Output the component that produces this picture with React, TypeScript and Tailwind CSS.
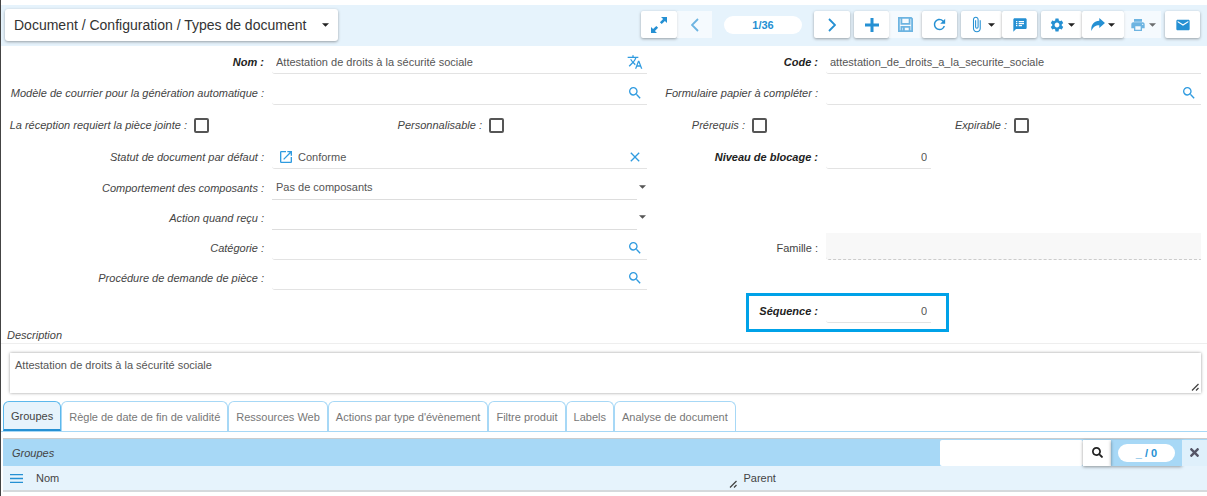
import type { ReactNode } from "react";
import { FaSearch, FaTimes } from "react-icons/fa";
import {
  MdAttachFile,
  MdClose,
  MdEmail,
  MdOpenInNew,
  MdPrint,
  MdRefresh,
  MdSearch,
  MdSettings,
  MdSpeakerNotes,
  MdTranslate,
} from "react-icons/md";

const tabs = [
  "Groupes",
  "Règle de date de fin de validité",
  "Ressources Web",
  "Actions par type d'évènement",
  "Filtre produit",
  "Labels",
  "Analyse de document",
];

const checks = [
  { id: "reception", label: "La réception requiert la pièce jointe :" },
  { id: "personnalisable", label: "Personnalisable :" },
  { id: "prerequis", label: "Prérequis :" },
  { id: "expirable", label: "Expirable :" },
];

const Caret = ({ className = "text-[#222]" }: { className?: string }) => (
  <svg viewBox="0 0 8 4" className={`w-[7px] h-1 shrink-0 ${className}`} fill="currentColor">
    <path d="M0 0h8L4 4z" />
  </svg>
);

const ExpandIcon = () => (
  <svg viewBox="0 0 16 16" className="size-4" fill="currentColor">
    <path d="M10 0h6v6l-2.1-2.1-3.2 3.2-1.8-1.8 3.2-3.2zM6 16H0v-6l2.1 2.1 3.2-3.2 1.8 1.8-3.2 3.2z" />
  </svg>
);

const ChevronIcon = ({ left }: { left?: boolean }) => (
  <svg viewBox="0 0 8 14" className="w-2 h-[14px]" fill="none" stroke="currentColor" strokeWidth="1.8">
    <path d={left ? "M7 1 1 7l6 6" : "m1 1 6 6-6 6"} />
  </svg>
);

const PlusIcon = () => (
  <svg viewBox="0 0 14 14" className="size-[14px]" stroke="currentColor" strokeWidth="3">
    <path d="M7 0v14M0 7h14" />
  </svg>
);

const SaveIcon = () => (
  <svg viewBox="0 0 15 15" className="size-[15px]" fill="none" stroke="currentColor" strokeWidth="1.8">
    <path d="M.9.9h12.2l1 1v12.2H.9zM3.4.9v6h8.2v-6M3.4 14V9.8h8.2V14" />
    <path d="M5.8 10v4" strokeWidth="2" />
  </svg>
);

const ShareIcon = () => (
  <svg viewBox="0 0 16 15" className="w-[14px] h-[13px]" fill="currentColor">
    <path d="M9.5 0 16 5.8l-6.5 5.8V8.4C5.5 8.3 2.6 10 .4 15-.6 8.600 3 3.600 9.500 3.300z" />
  </svg>
);

const MenuIcon = () => (
  <svg viewBox="0 0 13 9" className="w-[13px] h-[9px]" stroke="currentColor" strokeWidth="1.3">
    <path d="M0 .7h13M0 4.500h13M0 8.300h13" />
  </svg>
);

const Grip = () => (
  <svg viewBox="0 0 8 8" className="size-2" stroke="#444" strokeWidth="1.3">
    <path d="m1 7.500 6.500-6.500M5 7.500 7.500 5" />
  </svg>
);

interface ToolProps {
  label: string;
  width?: string;
  disabled?: boolean;
  children: ReactNode;
}

const Tool = ({ label, width = "w-[35px]", disabled, children }: ToolProps) => (
  <button
    type="button"
    aria-label={label}
    disabled={disabled}
    className={`flex h-[27px] items-center justify-center gap-[3px] text-[#2590d3] ${width} ${
      disabled ? "bg-white/60 [&>svg]:opacity-65" : "rounded-[2px] bg-white shadow-[0_1px_3px_rgba(0,0,0,0.35)]"
    }`}
  >
    {children}
  </button>
);

interface FieldProps {
  id: string;
  label: string;
  value?: string;
  bold?: boolean;
  number?: boolean;
  upright?: boolean;
  readOnly?: boolean;
  select?: boolean;
  before?: ReactNode;
  icon?: ReactNode;
}

const Field = ({ id, label, value = "", bold, number, upright, readOnly, select, before, icon }: FieldProps) => (
  <>
    <label
      htmlFor={id}
      className={`pr-2 pt-[2px] text-right whitespace-nowrap ${bold ? "font-bold text-[#222]" : ""} ${upright ? "" : "italic"}`}
    >
      {label}
    </label>
    {select ? (
      <div className="flex h-[27px] items-center">
        <select
          id={id}
          defaultValue={value}
          className="h-full min-w-0 flex-1 appearance-none border-b border-[#ddd] px-1 pt-px text-[#555]"
        >
          <option>{value}</option>
        </select>
        <div className="pl-[2px] pr-px">
          <Caret className="text-[#555]" />
        </div>
      </div>
    ) : (
      <div
        className={`flex h-[27px] items-center rounded-bl-[3px] border-b ${number ? "w-[105px]" : ""} ${
          readOnly ? "border-dashed border-[#ccc] bg-[#f8f8f8]" : "border-[#e3e3e3]"
        }`}
      >
        {before}
        <input
          id={id}
          type="text"
          readOnly={readOnly}
          defaultValue={value}
          className={`h-full min-w-0 flex-1 px-1 pt-[3px] text-[#555] outline-none ${number ? "text-right" : ""}`}
        />
        {icon && (
          <button type="button" aria-label={`Ouvrir ${label}`} className="mr-1 pt-[3px] text-base text-[#2f9be0]">
            {icon}
          </button>
        )}
      </div>
    )}
  </>
);

export default function App() {
  return (
    <div className="border-l border-[#444] bg-white pb-1 pt-[5px] font-['Liberation_Sans',Arial,sans-serif] text-[11px] leading-4 text-[#444]">
      <header className="flex h-[41px] items-center justify-between bg-[#e6f3fc] pb-[2px] pl-1 pr-[7px]">
        <button
          type="button"
          className="flex h-8 items-center gap-4 rounded-[3px] bg-white px-[9px] text-sm text-[#333] shadow-[0_1px_3px_rgba(0,0,0,0.35)]"
        >
          Document / Configuration / Types de document
          <Caret />
        </button>

        <div className="flex items-center gap-1">
          <div className="flex">
            <Tool label="Agrandir" width="w-9"><ExpandIcon /></Tool>
            <Tool label="Précédent" disabled><ChevronIcon left /></Tool>
          </div>
          <span className="mx-2 w-[78px] rounded-full bg-white text-center font-bold leading-[18px] text-[#2590d3]">1/36</span>
          <Tool label="Suivant" width="w-9"><ChevronIcon /></Tool>
          <div className="flex">
            <Tool label="Nouveau"><PlusIcon /></Tool>
            <Tool label="Enregistrer" disabled width="w-[33px]"><SaveIcon /></Tool>
            <Tool label="Recharger"><MdRefresh size={17} /></Tool>
          </div>
          <div className="flex">
            <Tool label="Attachements" width="w-[41px]"><MdAttachFile size={17} /><Caret /></Tool>
            <Tool label="Notes"><MdSpeakerNotes size={16} /></Tool>
          </div>
          <div className="flex">
            <Tool label="Actions" width="w-[41px]"><MdSettings size={16} /><Caret /></Tool>
            <Tool label="Relations" width="w-[42px]"><ShareIcon /><Caret /></Tool>
            <Tool label="Imprimer" disabled width="w-[37px]"><MdPrint size={16} /><Caret /></Tool>
          </div>
          <Tool label="E-mail"><MdEmail size={16} /></Tool>
        </div>
      </header>

      <main>
        <div className="grid grid-cols-[271fr_375fr_179fr_375fr] items-center gap-y-1 pr-[6px] pt-px">
          <Field id="nom" label="Nom :" bold value="Attestation de droits à la sécurité sociale" icon={<MdTranslate />} />
          <Field id="code" label="Code :" bold value="attestation_de_droits_a_la_securite_sociale" />
          <Field id="modele" label="Modèle de courrier pour la génération automatique :" icon={<MdSearch />} />
          <Field id="formulaire" label="Formulaire papier à compléter :" icon={<MdSearch />} />

          <div className="col-span-4 grid h-[29px] grid-cols-[208fr_295fr_263fr_262fr_172fr] items-center pt-[3px]">
            {checks.map((check) => (
              <div key={check.id} className="flex items-center justify-end gap-[7px]">
                <label htmlFor={check.id} className="whitespace-nowrap italic">{check.label}</label>
                <input
                  id={check.id}
                  type="checkbox"
                  className="size-[15px] appearance-none rounded-[2px] border-2 border-[#555] bg-white checked:bg-[#2590d3]"
                />
              </div>
            ))}
          </div>

          <Field
            id="statut"
            label="Statut de document par défaut :"
            value="Conforme"
            before={<MdOpenInNew size={16} className="ml-[6px] mt-[3px] text-[#2f9be0]" />}
            icon={<MdClose />}
          />
          <Field id="niveau" label="Niveau de blocage :" bold number value="0" />
        </div>

        <div className="grid grid-cols-[271fr_375fr_179fr_375fr] items-center gap-y-[3px] pr-[6px] pt-1">
          <Field id="comportement" label="Comportement des composants :" select value="Pas de composants" />
          <div className="col-span-2" />
          <Field id="action" label="Action quand reçu :" select />
          <div className="col-span-2" />
          <Field id="categorie" label="Catégorie :" icon={<MdSearch />} />
          <Field id="famille" label="Famille :" upright readOnly />
          <Field id="procedure" label="Procédure de demande de pièce :" icon={<MdSearch />} />
          <div className="col-span-2" />
          <div className="col-span-2 col-start-3 ml-[99px] grid w-[203px] grid-cols-[77px_1fr] items-center border-[3px] border-[#00a2e8] pb-[6px]">
            <Field id="sequence" label="Séquence :" bold number value="0" />
          </div>
        </div>

        <div className="-mt-[5px] border-b border-[#eee] pl-[6px]">
          <label htmlFor="description" className="italic">Description</label>
        </div>
        <div className="relative ml-[9px] mr-[6px] mt-[9px] h-10 shadow-[0_0_3px_rgba(0,0,0,0.4)]">
          <textarea
            id="description"
            className="block h-full w-full resize-none px-[5px] py-1 text-[#555] outline-none"
            defaultValue="Attestation de droits à la sécurité sociale"
          />
          <div className="absolute bottom-[2px] right-[2px]"><Grip /></div>
        </div>

        <div role="tablist" className="mt-2 flex border-b border-[#a7d8f6] pl-[2px]">
          {tabs.map((tab, index) => (
            <button
              key={tab}
              type="button"
              role="tab"
              aria-selected={index === 0}
              className={`h-[30px] rounded-t-md px-[7px] whitespace-nowrap ${
                index === 0
                  ? "border border-b-2 border-[#5cb8ec] border-b-[#2590d3] bg-[#e6f3fc] text-[#444]"
                  : "border-x border-t border-[#a7d8f6] text-[#777]"
              }`}
            >
              {tab}
            </button>
          ))}
        </div>

        <section className="ml-[2px] mt-[6px] border-t border-[#ccc]">
          <div className="flex h-[27px] items-center bg-[#a7d8f6]">
            <h2 className="flex-1 pl-[9px] italic">Groupes</h2>
            <input type="text" aria-label="Rechercher" className="h-[26px] w-[143px] rounded-[2px] bg-white px-1 outline-none" />
            <button type="button" aria-label="Lancer la recherche" className="flex h-[26px] w-7 items-center justify-center bg-white text-[#222] shadow-[0_1px_3px_rgba(0,0,0,0.4)]">
              <FaSearch size={11} />
            </button>
            <div className="flex h-[26px] w-[71px] items-center justify-center shadow-[0_1px_3px_rgba(0,0,0,0.35)]">
              <span className="w-[57px] rounded-full bg-white text-center font-bold leading-[18px] text-[#2590d3]">_ / 0</span>
            </div>
            <button type="button" aria-label="Supprimer" className="flex h-[26px] w-[25px] items-center justify-center bg-[#dff0fb] text-[#556]">
              <FaTimes size={13} />
            </button>
          </div>
          <table className="w-full table-fixed border-b-2 border-[#d5d9dc] bg-[#e6f3fc]">
            <thead>
              <tr className="h-[25px] text-left">
                <th className="w-[61%] p-0 font-normal">
                  <div className="flex items-center pl-[7px]">
                    <div className="text-[#2590d3]"><MenuIcon /></div>
                    <span className="flex-1 pl-[13px]">Nom</span>
                    <div className="pt-3"><Grip /></div>
                  </div>
                </th>
                <th className="p-0 pl-[6px] font-normal">Parent</th>
              </tr>
            </thead>
          </table>
        </section>
      </main>
    </div>
  );
}
